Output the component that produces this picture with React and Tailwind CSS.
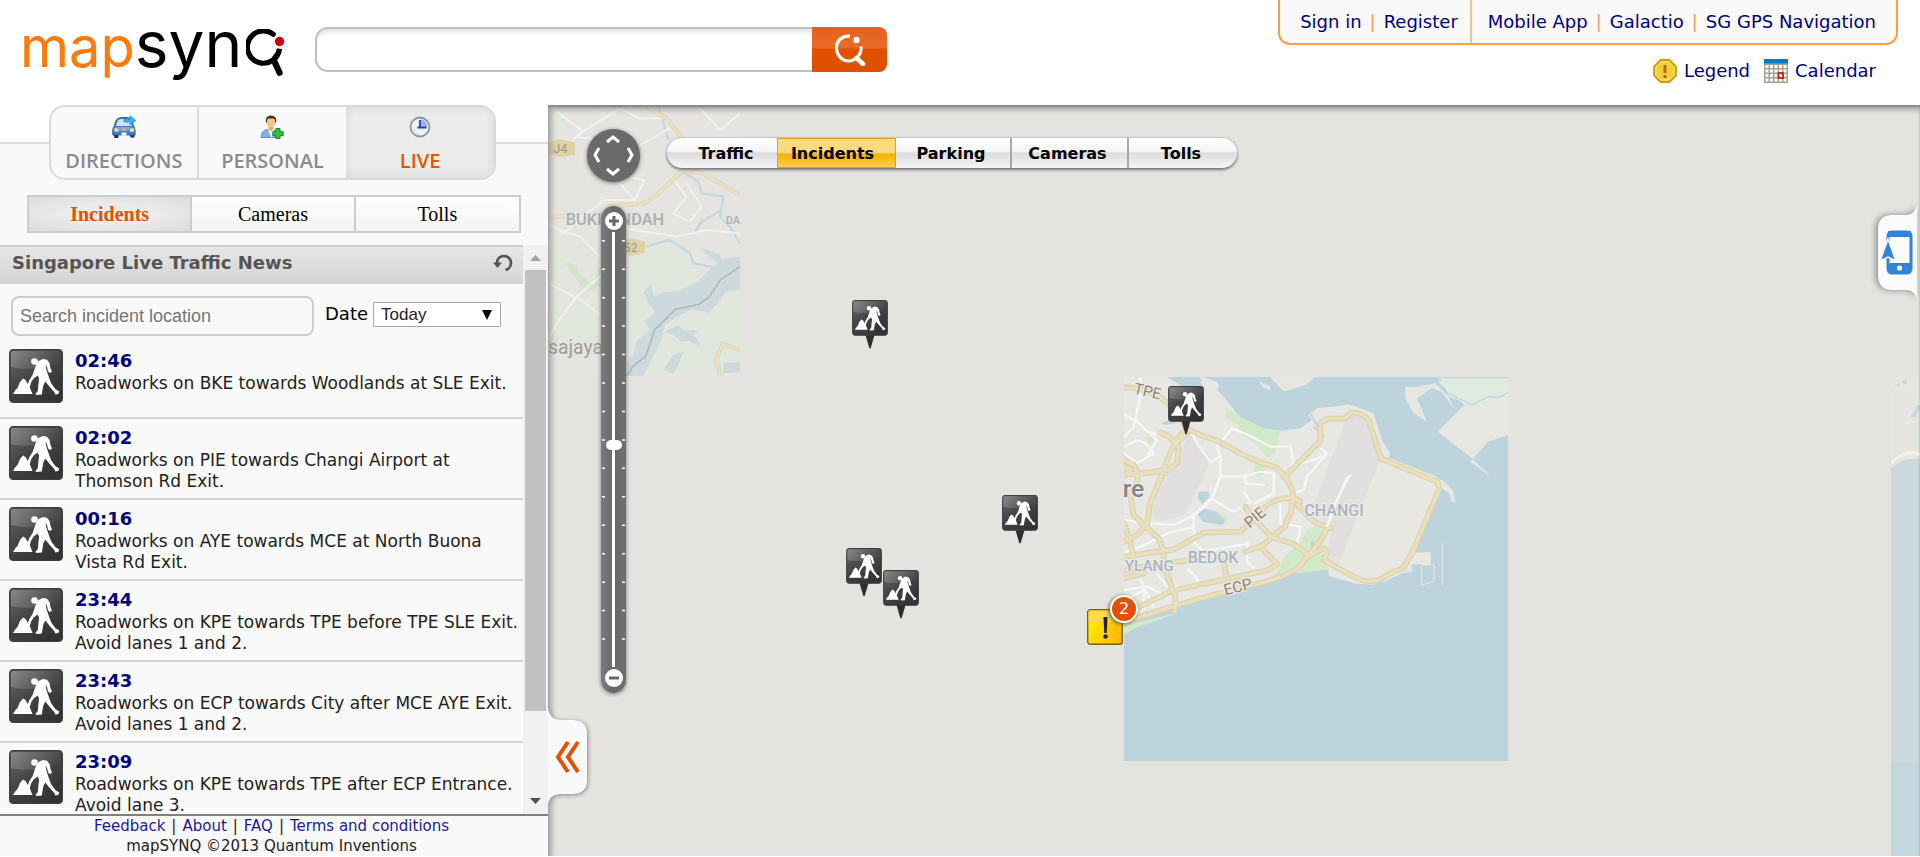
import React, { useState } from "react";

const incidents = [
  { time: "02:46", text: "Roadworks on BKE towards Woodlands at SLE Exit." },
  { time: "02:02", text: "Roadworks on PIE towards Changi Airport at Thomson Rd Exit." },
  { time: "00:16", text: "Roadworks on AYE towards MCE at North Buona Vista Rd Exit." },
  { time: "23:44", text: "Roadworks on KPE towards TPE before TPE SLE Exit. Avoid lanes 1 and 2." },
  { time: "23:43", text: "Roadworks on ECP towards City after MCE AYE Exit. Avoid lanes 1 and 2." },
  { time: "23:09", text: "Roadworks on KPE towards TPE after ECP Entrance. Avoid lane 3." },
];

const pins = [
  { id: "a", place: "left-[304px] top-[195px]" },
  { id: "b", place: "left-[620px] top-[281px]" },
  { id: "c", place: "left-[454px] top-[390px]" },
  { id: "d", place: "left-[298px] top-[443px]" },
  { id: "e", place: "left-[335px] top-[465px]" },
];

function RoadworkIcon({ className, id, pin }) {
  return (
    <svg viewBox={pin ? "0 0 54 74" : "0 0 54 54"} className={className} aria-hidden="true">
      <defs>
        <linearGradient id={id} x1="0" y1="0" x2="0.7" y2="1">
          <stop offset="0" stopColor="#6b6b6b" />
          <stop offset="0.5" stopColor="#454545" />
          <stop offset="1" stopColor="#333" />
        </linearGradient>
        <linearGradient id={id + "g"} x1="0" y1="0" x2="1" y2="0.3">
          <stop offset="0" stopColor="#8e8e8e" />
          <stop offset="1" stopColor="#484848" />
        </linearGradient>
      </defs>
      {pin && <path d="M20 52h14l-6 21h-2z" fill="#2e2e2e" />}
      <rect x="0.75" y="0.75" width="52.5" height="52.5" rx="3.5" fill={`url(#${id})`} stroke="#3d3d3d" strokeWidth="1.5" />
      <path d="M2 4.500a2.500 2.500 0 0 1 2.500-2.500h45a2.500 2.500 0 0 1 2.500 2.500V12C40 19 18 22 2 18z" fill={`url(#${id}g)`} opacity="0.85" />
      <path d="M4 45l2.500-4 2-2 2.500-6 3-3.500 2.500 1.500 3 5 2 4 2 5z" fill="#fff" />
      <circle cx="25.500" cy="12.500" r="3.300" fill="#fff" />
      <path
        d="M27 16l2.500-4 4.500-2 4 .8 2.500 3.200 1 5 1.500 3.500-2 1.500-2-1.500-1-4.500-1.500-2.500.8 5 2 6 1 3 2 5 4 5.500 4 2.500-1 2.500-3 .5-1-2.500-5-5.500-4-5-2 4-1 6-.5 3-5 .5-1.500-1 2.500-3 .5-5.500.8-7-1.500-3-4 3-2.500 4-1.500 5-1.500 1-1-1.500 2-6.500 3.500-5.500z"
        fill="#fff"
      />
    </svg>
  );
}

function Logo() {
  return (
    <a href="#home" aria-label="mapSYNQ home" className="flex items-baseline leading-none font-['Inter',sans-serif]">
      <span className="text-[56px] leading-[64px] text-[#ff7a0a]">map</span>
      <span className="text-[64px] leading-[64px] text-black">syn</span>
      <svg viewBox="0 0 38 48" className="ml-1 h-[50px] w-10 translate-y-3" aria-hidden="true">
        <path d="M26 5A15.500 15.500 0 1 0 32 19q-.5 4.500-4.500 8.500" fill="none" stroke="#000" strokeWidth="5" strokeLinecap="round" />
        <path d="M27 31l5 11" stroke="#000" strokeWidth="6" strokeLinecap="round" />
        <circle cx="32" cy="12" r="4.500" fill="#d4000f" />
      </svg>
    </a>
  );
}

function Header() {
  const link = "text-[#00007f]";
  return (
    <header className="flex h-[105px] shrink-0 items-start bg-white">
      <div className="w-[315px] shrink-0 pl-5 pt-3">
        <Logo />
      </div>
      <form className="mt-[27px] flex h-[45px] w-[572px] shrink-0" onSubmit={(e) => e.preventDefault()}>
        <input
          type="search"
          aria-label="Search the map"
          className="min-w-0 flex-1 rounded-l-[13px] border-2 border-r-0 border-[#bfbfbf] bg-white px-3 text-lg shadow-[inset_0_5px_5px_-2px_#e2e2e2] outline-none"
        />
        <button
          type="submit"
          aria-label="Search"
          className="flex w-[75px] items-center justify-center rounded-r-lg bg-[linear-gradient(#e4611b,#e86c28_45%,#e05200_50%,#df5000)]"
        >
          <svg viewBox="0 0 32 32" className="size-8" fill="none" stroke="#fff" aria-hidden="true">
            <path d="M16 2.200C8 1 2.500 7 2.500 14S8 27 14.500 27 27 21 27 14.500v-2" strokeWidth="3.200" />
            <path d="M22.500 24l6.500 6" strokeWidth="4.500" strokeLinecap="round" />
            <circle cx="22.500" cy="6" r="3.200" fill="#fff" stroke="none" />
          </svg>
        </button>
      </form>
      <div className="flex flex-1 flex-col items-end pr-[22px] text-lg">
        <nav aria-label="Account" className="flex h-[45px] rounded-b-xl border-2 border-t-0 border-[#fd9f3c] bg-[#f9f9f9]">
          <div className="flex items-center gap-2 border-r-2 border-[#fdc083] pl-5 pr-3">
            <a href="#signin" className={link}>Sign in</a>
            <span className="text-[#ff9a55]">|</span>
            <a href="#register" className={link}>Register</a>
          </div>
          <div className="flex items-center gap-2 pl-4 pr-5">
            <a href="#mobile" className={link}>Mobile App</a>
            <span className="text-[#ff9a55]">|</span>
            <a href="#galactio" className={link}>Galactio</a>
            <span className="text-[#ff9a55]">|</span>
            <a href="#sg" className={link}>SG GPS Navigation</a>
          </div>
        </nav>
        <div className="mt-3 flex items-center gap-[14px] pr-[22px]">
          <a href="#legend" className="flex items-center gap-[7px] text-[#00007f]">
            <svg viewBox="0 0 24 24" className="size-6" aria-hidden="true">
              <path d="M7.500 1h9L23 7.500v9L16.500 23h-9L1 16.500v-9z" fill="#f3cf35" stroke="#d09a14" strokeWidth="1.800" />
              <path d="M8 3h8l5 5v8l-5 5H8l-5-5V8z" fill="none" stroke="#f9e47c" />
              <path d="M10.500 6h3v8h-3zM10.500 16h3v3h-3z" fill="#b06a12" />
            </svg>
            Legend
          </a>
          <a href="#calendar" className="flex items-center gap-[7px] text-[#00007f]">
            <svg viewBox="0 0 24 24" className="size-6" aria-hidden="true">
              <path d="M0 0h24v24H0z" fill="#a3a392" />
              <path d="M0 0h24v4.500H0z" fill="#0b7dbe" />
              <path d="M1.500 6h3v3h-3zm4.500 0h3v3H6zm4.500 0h3v3h-3zm4.500 0h3v3h-3zm4.500 0h3v3h-3zM1.500 10.500h3v3h-3zm4.500 0h3v3H6zm4.500 0h3v3h-3zm4.500 0h3v3h-3zm4.500 0h3v3h-3zM1.500 15h3v3h-3zM6 15h3v3H6zm4.500 0h3v3h-3zm9 0h3v3h-3zm-18 4.500h3v3h-3zm4.500 0h3v3H6zm4.500 0h3v3h-3zm4.500 0h3v3h-3zm4.500 0h3v3h-3z" fill="#fff" />
              <path d="M14.500 14h4.500v5h-4.500z" fill="#fff" stroke="#c5302b" strokeWidth="2" />
            </svg>
            Calendar
          </a>
        </div>
      </div>
    </header>
  );
}

function CarIcon() {
  return (
    <svg viewBox="0 0 24 24" className="size-6" aria-hidden="true">
      <path d="M1.500 19h5v4h-4zM17.500 19h5v3.500h-4z" fill="#26324a" />
      <path d="M4 5.500Q5 3 9 2.500h7Q19 3 20 6l2 6q1.500 2 1.200 8H.8Q.3 13 2 11.500z" fill="#3c7fcf" stroke="#23548f" strokeWidth="0.800" />
      <path d="M5.500 6Q6 4.500 9 4h6q3 .3 3.500 2.500l1.500 4.500H4z" fill="#cfe3f2" />
      <path d="M2 13q10-2.500 20 0v2q-10 2-20 0z" fill="#6aa8e8" />
      <path d="M2.500 13l4 .8v3h-4zM18 13.800l4-.8v3.800h-4z" fill="#ffd98a" />
      <path d="M9.500 13.500h5l-1 2h-3z" fill="#e4bd5e" />
      <path d="M9.500 17.500h5v3h-5z" fill="#fff" />
      <path d="M12 4h6V.8l5.800 4.700-5.800 4.700V7h-6z" fill="#3bb0f2" stroke="#1c84cc" strokeWidth="0.600" />
    </svg>
  );
}

function PersonIcon() {
  return (
    <svg viewBox="0 0 24 24" className="size-6" aria-hidden="true">
      <path d="M1 22.500q0-7 6-8h6q6 1 6 8z" fill="#7db2e6" stroke="#4b85c2" strokeWidth="0.800" />
      <path d="M8 14l3 8.500h1L14 14z" fill="#fff" />
      <path d="M8.500 10h5v4l-2.500 2.500L8.500 14z" fill="#e2ae6f" />
      <ellipse cx="11" cy="6.500" rx="4.600" ry="5.500" fill="#f0c48c" />
      <path d="M5.800 7Q5 .5 11 .5T16.200 7l-1.200 1q.5-4-1.500-4.500h-5Q6.500 4 7 8z" fill="#4f2f22" />
      <path d="M16 13.500h4v3.200h3.200v4H20v3h-4v-3h-3.200v-4H16z" fill="#30c43c" stroke="#0f8a20" />
    </svg>
  );
}

function ClockIcon() {
  return (
    <svg viewBox="0 0 24 24" className="size-6" aria-hidden="true">
      <circle cx="12" cy="12" r="9.500" fill="#eaf3f5" stroke="#8f979c" strokeWidth="1.800" />
      <path d="M12.500 4.500a7 7 0 0 1 7 7.500h-7z" fill="#9fb2f2" />
      <path d="M12 5v8.500M9.500 12.500h9" stroke="#2f3f9c" strokeWidth="1.800" />
      <path d="M5 15q3 4.500 7 4.500" stroke="#c9dfdf" fill="none" />
    </svg>
  );
}

const modes = [
  { name: "DIRECTIONS", Icon: CarIcon },
  { name: "PERSONAL", Icon: PersonIcon },
  { name: "LIVE", Icon: ClockIcon },
];

function Sidebar() {
  return (
    <aside className="flex w-[548px] shrink-0 flex-col bg-[#f9f9f9]">
      <div className="shrink-0 bg-[linear-gradient(#fff_37px,#dadada_37px,#dadada_39px,#f9f9f9_39px)] pl-[49px] pr-[52px]">
        <div className="grid h-[75px] grid-cols-3 overflow-hidden rounded-[16px] border-2 border-[#dadada] bg-[#f9f9f9]">
          {modes.map(({ name, Icon }) => (
            <button
              key={name}
              type="button"
              className={
                "flex flex-col items-center pt-2 font-['Open_Sans',sans-serif] text-xl font-semibold " +
                (name === "LIVE"
                  ? "bg-[#ebebeb] text-[#e85500] shadow-[inset_0_0_10px_#d4d4d4]"
                  : "text-[#8b8b8b] " + (name === "DIRECTIONS" ? "border-r-2 border-[#dadada]" : ""))
              }
            >
              <Icon />
              <span className="mt-2 leading-7">{name}</span>
            </button>
          ))}
        </div>
      </div>
      <div className="mx-[27px] mb-3 mt-[15px] grid h-[38px] shrink-0 grid-cols-3 divide-x-2 divide-[#ccc] border-2 border-[#ccc] bg-linear-to-b from-white to-[#f3f3f3] font-['Liberation_Serif',serif] text-xl">
        <button type="button" className="bg-[radial-gradient(ellipse_at_center,#ebebeb_40%,#dcdcdc)] font-bold text-[#e05200]">Incidents</button>
        <button type="button">Cameras</button>
        <button type="button">Tolls</button>
      </div>

      <div className="flex min-h-0 flex-1">
        <div className="min-w-0 flex-1 overflow-hidden">
          <div className="flex h-[39px] items-center justify-between border-t-2 border-[#cfcfcf] bg-linear-to-b from-[#e6e6e6] to-[#d4d4d4] pb-[6px] pl-3 pr-[10px]">
            <h1 className="text-lg font-bold text-[#555]">Singapore Live Traffic News</h1>
            <button type="button" aria-label="Refresh">
              <svg viewBox="0 0 20 18" className="h-[18px] w-5" aria-hidden="true">
                <path d="M4 9.500C4 4 7.500 2 11 2c4 0 7 3 7 6.700 0 3.500-2.500 6.500-5.500 7.300" fill="none" stroke="#555" strokeWidth="2.600" />
                <path d="M0 8.500h9L4.500 14z" fill="#555" />
              </svg>
            </button>
          </div>
          <div className="flex h-[58px] items-start pl-[11px] pt-3">
            <input
              type="text"
              aria-label="Search incident location"
              placeholder="Search incident location"
              className="h-10 w-[303px] rounded-lg border-2 border-[#ccc] bg-[#f9f9f9] px-[7px] font-['Liberation_Sans',sans-serif] text-lg outline-none placeholder:text-[#757575]"
            />
            <label htmlFor="date" className="ml-[11px] mt-1 text-lg">Date</label>
            <div className="relative ml-[5px] mt-[6px]">
              <select
                id="date"
                className="block h-[25px] w-[128px] appearance-none rounded-[1px] border border-[#a6a6a6] bg-white pl-[7px] font-['Liberation_Sans',sans-serif] text-[17px] leading-5 text-[#222]"
              >
                <option>Today</option>
              </select>
              <svg viewBox="0 0 10 10" className="pointer-events-none absolute right-[9px] top-2 size-[10px]" aria-hidden="true">
                <path d="M0 0h10L5 10z" fill="#000" />
              </svg>
            </div>
          </div>
          <ul>
            {incidents.map((item, i) => (
              <li key={item.time} className="flex min-h-[77px] gap-3 border-b-2 border-[#d3d3d3] pb-[6px] pl-[9px] pr-[2px] pt-[7px]">
                <RoadworkIcon id={"list" + i} className="size-[54px] shrink-0" />
                <div>
                  <a href={"#incident-" + i} className="block text-lg leading-6 font-bold text-[#00007f]">{item.time}</a>
                  <p className="text-[17px] leading-[21px] text-[#222]">{item.text}</p>
                </div>
              </li>
            ))}
          </ul>
        </div>
        <div className="flex w-[25px] flex-col items-center bg-[#f1f1f1]" aria-hidden="true">
          <svg viewBox="0 0 25 25" className="size-[25px] shrink-0"><path d="M7 16l5.500-6 5.500 6z" fill="#a3a3a3" /></svg>
          <div className="min-h-0 w-[21px] flex-1"><div className="h-[85%] bg-[#c1c1c1]" /></div>
          <svg viewBox="0 0 25 25" className="size-[25px] shrink-0"><path d="M7 9l5.500 6L18 9z" fill="#505050" /></svg>
        </div>
      </div>

      <footer className="shrink-0 border-t-2 border-[#808080] pr-[5px] text-center text-[15px] leading-5 text-[#222]">
        <p className="flex justify-center gap-[6px] [&>a]:text-[#1a1a99]">
          <a href="#feedback">Feedback</a>|<a href="#about">About</a>|<a href="#faq">FAQ</a>|<a href="#terms">Terms and conditions</a>
        </p>
        <p>mapSYNQ ©2013 Quantum Inventions</p>
      </footer>
    </aside>
  );
}

function WestTile() {
  return (
    <svg viewBox="24 15 576 813" preserveAspectRatio="xMinYMin slice" className="absolute left-0 top-0 h-[271px] w-[192px]" aria-hidden="true">
      <path d="M24 15h576v813H24z" fill="#e6e4e1" />
      <path d="M24 15h70v60l-40 40-30-10zM300 440l90-20 60 50 40 80-60 90-90 40-60 60H24V630l60-40 40 20 60-60 70-30zM24 420l60 30 20 60-80 40zM600 520v308H260l80-120 90-90 120-60z" fill="#e1e7dd" />
      <path d="M70 485l40 10 10 30 40 30 15-55 25 20-5 30-50 25-25-20-25-40z" fill="#d3e4c8" />
      <g fill="#ccd9dd">
        <path d="M600 470l-55 8-40 35-35 35-60 25-50 5-30 30 15 30-30 25 15 30-40 30-10 40-20 20v45h50l30-60 25-50 10-45 40-25 40-20 50 10 30-30 20-30 45-10z" />
        <path d="M310 580l22-30 10 40 30-5-10 12-25 10-8 12-10-25zM375 695l40-20 15 15 50 0-20 12 25 40-40-20-20 5-20-20zM480 440l60 25 10 30-40-20zM400 765l30-10-15 40-15 25-30-10zM550 790l50-5v30l-50 5z" />
      </g>
      <g fill="none" stroke="#c3d8df" strokeWidth="7">
        <path d="M430 215l45 30 10 35 65 10-10 60 30 30 30 50M545 330l-60 35-20 30M320 440l30-10 40-10 60 40 10 30 80 15M355 15l30 105" />
      </g>
      <g fill="none" stroke="#f2f1ef" strokeWidth="6">
        <path d="M50 35l80 60 110-70 60 30 90 0M130 90l-70 70M24 370l50 30 40-40 80-60 90 0 30-60-60-10-60-110-90-10M300 135l90-50M480 25l60 65 60-50M240 250l60 70M395 230l45 60-40 50 50 25 35-45-45-70M250 385l100 15 60 10 90-20 100 10M24 550l90 45 70 50 60 10M190 520l-80 70-60 80-30 60M60 390l60 20 60 60 60 10" />
      </g>
      <g fill="none" stroke="#dfd4b0" strokeWidth="13" strokeLinejoin="round">
        <path d="M320 20l60 35 55 70M24 355l50-8M200 320l110-10 40-25 80-75 60 10 110 65M600 750l-52-18-20 45 15 60" />
      </g>
      <g fill="none" stroke="#e9e1c7" strokeWidth="8" strokeLinejoin="round">
        <path d="M320 20l60 35 55 70M24 355l50-8M200 320l110-10 40-25 80-75 60 10 110 65M600 750l-52-18-20 45 15 60" />
      </g>
      <path d="M260 828l20-30 37-30 28-80 62-60 70-15 30-22 35-52 60-40" fill="none" stroke="#b3afaf" strokeWidth="4" />
      <path d="M24 130l35-12 46 8v38l-46 8-35-10zM240 425l35-10 40 10v33l-40 10-35-8z" fill="#dfd3a2" />
      <g fontFamily="Roboto, sans-serif" fill="#999a9c" fontSize="38">
        <text x="40" y="158">J4</text>
        <text x="250" y="456">52</text>
        <text x="160" y="20" fill="#8a8a8a">SKUDAI</text>
        <text x="77" y="375" fontWeight="500" fontSize="49" fill="#abaeb2">BUKIT INDAH</text>
        <text x="558" y="372" fontWeight="500" fontSize="32" fill="#abaeb2">DA</text>
        <text x="24" y="762" fontSize="58" fill="#9d9d9d">sajaya</text>
      </g>
    </svg>
  );
}

const trunkRoads =
  "M191 82l40 2 60 22 36 28 50 70 45 22 50 16 70 40 50 22 55 18 30 30 17 34" +
  "M350 250l30-30M191 545l40-20 30-35 8-60 30-70 28-75 20-45 35-35M300 218l25 10 30 35-5 45-20 20-60 10-80 5M191 300l30 15 12 30-5 30-18 30 10 60 30 30 45 40 15 40 0 40 20 55 15 40 -2 45M191 320l20 10 -20 18" +
  "M191 590l150-22 90-50 110-3 70-70q35-35 80-30t20 20l50 50 50 20M698 395l-5 60-20 45-38 32-60-60-20-32M635 532l-30 25-50 18M635 532l70 22 40 30M600 560l50 52-25 18-130 28-160 34-100 50M490 600l8 55" +
  "M191 632l60-12 140-20M191 655l60-15M191 490l20 60 8 40" +
  "M191 790l50-20 110-35 140-38 120-30 60-20 40-20 70-85 22-42M740 590l50-25 10 10-8 25 50 30 60 30 20 4 30-2 50-28 25-8 30-50 80-190-5-20-170-70-35-110q-15-30-55-28l-20 18-50 0-22 12v55l-110 110";

const streets =
  "M191 165l40 20 30 30 60 15M240 51v60l-20 90-29 30M191 260l40-20 25 10 25 30-50 30-40-30M260 290l30-50-30-30M395 220l15 30 40 55 30-15 0 60-25 65-55 50 0 80 30 30 80-15 60-10" +
  "M480 290l-10-30 45-55 60 25 55 30 60 0 10 60M450 415l70 40 50-30-20-30M480 350l70 0 50-15 40 5v60l-60 30M555 350l0 20 60 5M690 320l70-20 35-15M660 430v60l60 10-10 50M191 480l80 10 70 5 60-30 40-30M191 580l70-30 60-30 80-20" +
  "M191 690l70-10 60 30M191 720l60-30 0 60M240 660l40 80M290 640l30 40 60 0M380 625l30 30 10 30M560 545v60l20 20M700 400l30-10 10-40 60-70-20-15M800 510l20-70 45-90";

function EastTile() {
  return (
    <svg viewBox="191 51 1152 1152" className="absolute left-[576px] top-[272px] size-[384px]" role="img" aria-label="Map of eastern Singapore">
      <path d="M191 51h1152v1152H191z" fill="#bed4dc" />
      <path
        d="M191 51h235l40 12 12 14-8 12 15 15 15 20 40 50 60 30 60 8 60-7 35-25-10-15 25-20 70-8 20-4 30 8 50 20 25 80 25 40-6 12 95 40 70 30 30 30 5 35-10-5-8-25-48-28-4 20-76 180 8 8 65-2v65h-25v-28h-32v24l-50 3-70 34-45-3-60-16-22-8-6-20-100 8-120 36-100 28-130 38-120 44-45 20z"
        fill="#e7e7e4"
      />
      <path d="M955 300l40-2 135 52 8 25-80 200-25 60-60 30-60-5-110-48 20-55z" fill="#e8e7e1" />
      <path d="M1035 80l30 2 60-12 40 40 15 35-35-50-30-10-45 30 30 70-40-25-25-45zM1130 62l213 0v163l-60 20-45 52-106-82 80-80zM597 65l30 12 5 15-25-10zM630 51h135l-30 25-65 18-30-30z" fill="#e7e7e2" />
      <path d="M1130 55h213v65l-60-5-50 20-65-25-25-50z" fill="#e0eadf" />
      <path d="M1165 100l70 35 50-25 30 2 28-14" fill="none" stroke="#b7d0dc" strokeWidth="3" />
      <path d="M1237 298l58 55-65-48z" fill="#e7e7e2" />
      <path d="M500 145l40 25 70 35 50 8-15 65-25 15-30-40-50-30-10-30-35-20zM585 310l30 5-5 30-35 0zM770 495l30 20-25 60 20 25 10 30-160 15 30-60 50-40 10-30zM256 230l25-2-5 20-15 8zM470 455l30 15 0 20-20-5zM191 790l50-5 120-30-80 30-60 20-30 20z" fill="#d1e8c9" />
      <path d="M355 290l30-70 70 75-80 170-80 20-20-20 20-90zM860 170l60-5 45 120-130 330-40-15 20-90-60-60 60-160z" fill="#e1e0de" />
      <path d="M415 395l30 0 2 15-20 22-15-15zM408 460l20-15 40 10 25 25-5 15-60-10zM320 51h100l10 60-30 30-30-60zM752 545h10v15h-10zM300 190l30-10 20 10-30 5z" fill="#bed4dc" />
      <path d="M1083 615h38v50l-38 10zM1146 550v125" fill="#bed4dc" stroke="#e7e7e4" strokeWidth="3" />
      <path d="M750 160l40 70-30-30M340 51l70 60" stroke="#bed4dc" strokeWidth="5" fill="none" />
      <path d={streets} fill="none" stroke="#f6f6f5" strokeWidth="7" strokeLinejoin="round" />
      <path d={trunkRoads} fill="none" stroke="#dccfa4" strokeWidth="17" strokeLinejoin="round" strokeLinecap="round" />
      <path d={trunkRoads} fill="none" stroke="#e8dfbf" strokeWidth="11" strokeLinejoin="round" strokeLinecap="round" />
      <path d="M800 500l25-70 35-75 12-10" fill="none" stroke="#f6f6f5" strokeWidth="7" />
      <g fontFamily="Roboto, sans-serif" paintOrder="stroke" stroke="#ecebe8" strokeWidth="7" strokeLinejoin="round">
        <g fill="#a9b4c1" fontWeight="500" fontSize="48">
          <text x="732" y="468">CHANGI</text>
          <text x="382" y="610">BEDOK</text>
          <text x="193" y="632" fontSize="46">YLANG</text>
        </g>
        <g fill="#94806b" fontSize="46">
          <text transform="translate(218 100) rotate(13)">TPE</text>
          <text transform="translate(568 506) rotate(-40)">PIE</text>
          <text transform="translate(495 706) rotate(-14)">ECP</text>
        </g>
        <text x="252" y="412" textAnchor="end" fontSize="74" fontWeight="500" fill="#858585">re</text>
      </g>
    </svg>
  );
}

function EdgeTile() {
  return (
    <svg viewBox="0 0 29 480" preserveAspectRatio="xMinYMin slice" className="absolute left-[1343px] top-[272px] h-[480px] w-[29px]" aria-hidden="true">
      <path d="M0 0h29v480H0z" fill="#cbd9dd" />
      <path d="M0 386h29v94H0z" fill="#c3d7de" />
      <path d="M0 0h29v82q-16-2-29 9z" fill="#e6e5e0" />
      <path d="M5 48q12-4 24 2v26q-10-10-16-20z" fill="#e1e7dd" />
      <path d="M0 86q14-14 29-9" fill="none" stroke="#f2f1ef" strokeWidth="3" />
      <path d="M3 8l6-2-1 4zM10 5l6-3-1 6zM19 40l7-12h3v5l-5 7z" fill="#c8d9de" />
    </svg>
  );
}

function Chevron({ d }) {
  return (
    <svg viewBox="0 0 16 16" className="size-4" fill="none" stroke="#fff" strokeWidth="3" aria-hidden="true">
      <path d={d} />
    </svg>
  );
}

function PanControl() {
  const arrow = "absolute flex size-4 items-center justify-center";
  return (
    <div className="relative size-[53px] rounded-full bg-[#6a6a6a] shadow-[0_1px_4px_#777]">
      <button type="button" aria-label="Pan up" className={arrow + " left-[18px] top-1"}><Chevron d="M2 9l6-5 6 5" /></button>
      <button type="button" aria-label="Pan left" className={arrow + " left-1 top-[18px]"}><Chevron d="M8 1L4 8l4 7" /></button>
      <button type="button" aria-label="Pan right" className={arrow + " right-1 top-[18px]"}><Chevron d="M8 1l4 7-4 7" /></button>
      <button type="button" aria-label="Pan down" className={arrow + " bottom-1 left-[18px]"}><Chevron d="M2 7l6 5 6-5" /></button>
    </div>
  );
}

function ZoomControl() {
  const [zoom, setZoom] = useState(51);
  const round = "flex size-[18px] items-center justify-center rounded-full bg-white";
  const step = (n) => setZoom((z) => Math.max(0, Math.min(100, z + n)));
  return (
    <div className="mt-6 flex h-[487px] w-[25px] flex-col items-center justify-between rounded-full bg-linear-to-r from-[#7c7c7c] via-[#686868] to-[#707070] py-[6px] shadow-[0_1px_4px_#777]">
      <button type="button" aria-label="Zoom in" className={round} onClick={() => step(5)}>
        <svg viewBox="0 0 10 10" className="size-[10px]" aria-hidden="true"><path d="M5 0v10M0 5h10" stroke="#666" strokeWidth="3" /></svg>
      </button>
      <div className="relative h-[435px] w-[25px]">
        <svg viewBox="0 0 25 435" className="absolute inset-0 h-full w-full" aria-hidden="true">
          <path d="M12.500 0v435" stroke="#fff" strokeWidth="3" />
          <path d="M2.500 8v420M22.500 8v420" stroke="#fff" strokeWidth="3" strokeDasharray="1.500 26.950" />
        </svg>
        <input
          type="range"
          min="0"
          max="100"
          value={zoom}
          onChange={(e) => setZoom(Number(e.target.value))}
          aria-label="Zoom level"
          className="absolute inset-0 h-full w-[25px] appearance-none bg-transparent [direction:rtl] [writing-mode:vertical-lr] [&::-webkit-slider-thumb]:h-[10px] [&::-webkit-slider-thumb]:w-4 [&::-webkit-slider-thumb]:appearance-none [&::-webkit-slider-thumb]:rounded-full [&::-webkit-slider-thumb]:bg-white"
        />
      </div>
      <button type="button" aria-label="Zoom out" className={round} onClick={() => step(-5)}>
        <svg viewBox="0 0 10 10" className="size-[10px]" aria-hidden="true"><path d="M0 5h10" stroke="#666" strokeWidth="3" /></svg>
      </button>
    </div>
  );
}

const layers = [
  { name: "Traffic", size: "w-[110px] rounded-l-full pl-2" },
  { name: "Incidents", size: "w-[119px] pr-2" },
  { name: "Parking", size: "w-[116px] border-r-2 pr-1" },
  { name: "Cameras", size: "w-[117px] border-r-2 pr-1" },
  { name: "Tolls", size: "w-[108px] rounded-r-full pr-1" },
];

function LayerBar() {
  return (
    <div className="flex h-[30px] rounded-full shadow-[0_2px_3px_#777,0_0_2px_#888]">
      {layers.map(({ name, size }) => (
        <button
          key={name}
          type="button"
          className={
            "border-[#a8a8a8] pt-px text-base font-bold text-black " +
            size +
            (name === "Incidents"
              ? " border border-[#d9a520] bg-[linear-gradient(#fbd97c,#fcda80_48%,#f8b100_54%,#fccb4c)]"
              : " bg-[linear-gradient(#fff,#f4f4f4_45%,#dcdcdc_50%,#f6f6f6)]")
          }
        >
          {name}
        </button>
      ))}
    </div>
  );
}

function MapView() {
  return (
    <main className="relative min-w-0 flex-1 overflow-hidden bg-[#e4e3df]">
      <WestTile />
      <EastTile />
      <EdgeTile />
      <div className="pointer-events-none absolute inset-0 shadow-[inset_4px_5px_5px_#83838399,inset_0_2px_2px_#8c8c8c]" />

      {pins.map((p) => (
        <button key={p.id} type="button" aria-label="Roadworks" className={"absolute " + p.place}>
          <RoadworkIcon id={"pin" + p.id} pin className="h-[49px] w-9" />
        </button>
      ))}

      <button type="button" aria-label="2 incidents" className="absolute left-[539px] top-[504px] size-9">
        <svg viewBox="0 0 36 36" className="size-9" aria-hidden="true">
          <defs>
            <linearGradient id="warn" x1="0" y1="0.3" x2="1" y2="0.7">
              <stop offset="0" stopColor="#fff000" />
              <stop offset="1" stopColor="#ffb400" />
            </linearGradient>
          </defs>
          <rect x="0.700" y="0.700" width="34.600" height="34.600" rx="2.500" fill="url(#warn)" stroke="#756514" strokeWidth="1.400" />
          <path d="M1.500 1.500h33v8Q20 15 1.500 13z" fill="#ffd75e" opacity="0.8" />
          <path d="M16.500 8h4l-.8 16h-2.400z" fill="#222" />
          <circle cx="18.500" cy="27.500" r="2.200" fill="#222" />
        </svg>
        <span className="absolute -right-[15px] -top-[14px] flex size-7 items-center justify-center rounded-full border-2 border-white bg-[#e05200] text-base text-white shadow-[-1px_1px_4px_#555]">2</span>
      </button>

      <div className="absolute left-[39px] top-6 flex flex-col items-center">
        <PanControl />
        <ZoomControl />
      </div>
      <div className="absolute left-[119px] top-[33px]">
        <LayerBar />
      </div>

      <button type="button" aria-label="Collapse panel" className="absolute bottom-[50px] left-0">
        <svg viewBox="0 0 44 100" className="h-[100px] w-11 drop-shadow-[1px_1px_2px_#888]" aria-hidden="true">
          <path d="M0 2q1 11 12 12h14q13 1 13 14v46q0 13-13 14H12Q1 89 0 98z" fill="#f9f9f9" />
          <path d="M20 36L10 51l10 15M30 36L20 51l10 15" fill="none" stroke="#e05200" strokeWidth="4" />
        </svg>
      </button>
      <button type="button" aria-label="Send to phone" className="absolute right-[3px] top-[97px]">
        <svg viewBox="0 0 44 100" className="h-[100px] w-11 drop-shadow-[-2px_0_3px_#888]" aria-hidden="true">
          <path d="M44 2q-1 10-10 11H18Q5 14 5 27v46q0 14 13 15h16q9 1 10 10z" fill="#fafafa" />
          <rect x="15" y="30" width="23" height="41" rx="4" fill="none" stroke="#3583d8" strokeWidth="3" />
          <path d="M15 29h23v6H15zM15 61h23v10H15z" fill="#3583d8" />
          <path d="M15 37L7 59l8-4 8 4z" fill="#3583d8" stroke="#fafafa" strokeWidth="1.500" />
          <circle cx="26.500" cy="66" r="2.600" fill="#fff" />
        </svg>
      </button>
    </main>
  );
}

export default function App() {
  return (
    <div className="flex h-screen flex-col bg-white pb-px font-['DejaVu_Sans',sans-serif] text-black">
      <Header />
      <div className="flex min-h-0 flex-1">
        <Sidebar />
        <MapView />
      </div>
    </div>
  );
}
